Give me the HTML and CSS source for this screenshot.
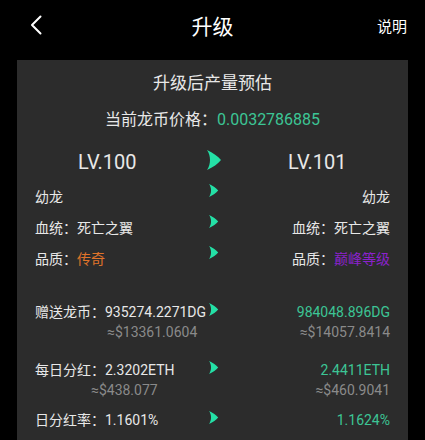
FILE: index.html
```html
<!DOCTYPE html>
<html lang="zh-CN">
<head>
    <meta charset="UTF-8">
    <title>升级</title>
    <link rel="stylesheet" href="styles.css">
</head>
<body>
    <div class="nav">
        <div class="nav-back">
            <svg width="12" height="20" viewBox="0 0 12 20"><path d="M10.5 1.5 L2 10 L10.5 18.5" fill="none" stroke="#fff" stroke-width="2" stroke-linecap="round" stroke-linejoin="round"/></svg>
        </div>
        <div class="nav-title">升级</div>
        <div class="nav-help">说明</div>
    </div>

    <div class="card">
        <div class="card-title">升级后产量预估</div>
        <div class="price">当前龙币价格：<span class="green">0.0032786885</span></div>

        <div class="cmp lv-row">
            <div class="lv lv-from">LV.100</div>
            <svg class="arrow-big" width="16" height="20" viewBox="0 0 16 20"><path d="M2 0 C8 3 13 6 16 10 C13 14 8 17 2 20 C6 14 6 6 2 0 Z" fill="#24e0a6"/></svg>
            <div class="lv lv-to">LV.101</div>
        </div>

        <div class="cmp attr">
            <div>幼龙</div>
            <svg class="arrow" width="12" height="13" viewBox="0 0 16 20"><path d="M2 0 C8 3 13 6 16 10 C13 14 8 17 2 20 C6 14 6 6 2 0 Z" fill="#24e0a6"/></svg>
            <div class="right">幼龙</div>
        </div>
        <div class="cmp attr">
            <div>血统：死亡之翼</div>
            <svg class="arrow" width="12" height="13" viewBox="0 0 16 20"><path d="M2 0 C8 3 13 6 16 10 C13 14 8 17 2 20 C6 14 6 6 2 0 Z" fill="#24e0a6"/></svg>
            <div class="right">血统：死亡之翼</div>
        </div>
        <div class="cmp attr">
            <div>品质：<span class="orange">传奇</span></div>
            <svg class="arrow" width="12" height="13" viewBox="0 0 16 20"><path d="M2 0 C8 3 13 6 16 10 C13 14 8 17 2 20 C6 14 6 6 2 0 Z" fill="#24e0a6"/></svg>
            <div class="right">品质：<span class="purple">巅峰等级</span></div>
        </div>

        <div class="cmp money money-first">
            <div>
                <div class="main">赠送龙币：935274.2271DG</div>
                <div class="sub sub-dg">≈$13361.0604</div>
            </div>
            <svg class="arrow" width="12" height="13" viewBox="0 0 16 20"><path d="M2 0 C8 3 13 6 16 10 C13 14 8 17 2 20 C6 14 6 6 2 0 Z" fill="#24e0a6"/></svg>
            <div class="right">
                <div class="main green">984048.896DG</div>
                <div class="sub">≈$14057.8414</div>
            </div>
        </div>
        <div class="cmp money money-eth">
            <div>
                <div class="main">每日分红：2.3202ETH</div>
                <div class="sub sub-eth">≈$438.077</div>
            </div>
            <svg class="arrow" width="12" height="13" viewBox="0 0 16 20"><path d="M2 0 C8 3 13 6 16 10 C13 14 8 17 2 20 C6 14 6 6 2 0 Z" fill="#24e0a6"/></svg>
            <div class="right">
                <div class="main green">2.4411ETH</div>
                <div class="sub">≈$460.9041</div>
            </div>
        </div>
        <div class="cmp money money-rate">
            <div class="main">日分红率：1.1601%</div>
            <svg class="arrow" width="12" height="13" viewBox="0 0 16 20"><path d="M2 0 C8 3 13 6 16 10 C13 14 8 17 2 20 C6 14 6 6 2 0 Z" fill="#24e0a6"/></svg>
            <div class="right main green">1.1624%</div>
        </div>
    </div>
</body>
</html>
```

FILE: styles.css
```css
:root {
    --green: #3cc595;
    --text: #e8e8e8;
    --sub: #8a8a8a;
}

body {
    margin: 0;
    background: #000;
    color: var(--text);
    font-family: Roboto, "Noto Sans CJK SC", sans-serif;
    height: 440px;
    overflow: hidden;
}

.nav {
    display: grid;
    grid-template-columns: 1fr auto 1fr;
    align-items: center;
    height: 50px;
}

.nav-back {
    padding-left: 30px;
    height: 20px;
}

.nav-title {
    font-size: 21px;
    color: #fff;
}

.nav-help {
    text-align: right;
    padding-right: 18px;
    font-size: 15px;
    color: #fff;
}

.card {
    margin: 10px 17px 0;
    padding: 11px 18px 30px;
    background: #2c2c2c;
    font-size: 14px;
}

.card-title {
    text-align: center;
    font-size: 17px;
    line-height: 24px;
}

.price {
    margin-top: 13px;
    text-align: center;
    font-size: 16px;
    line-height: 24px;
}

.green {
    color: var(--green);
}

.orange {
    color: #e0742a;
}

.purple {
    color: #8b22cc;
}

.cmp {
    display: grid;
    grid-template-columns: minmax(0, 1fr) 14px minmax(0, 1fr);
    white-space: nowrap;
}

.right {
    text-align: right;
}

.lv-row {
    margin-top: 16px;
    line-height: 28px;
    font-size: 20px;
}

.lv {
    text-align: center;
}

.lv-from {
    padding-right: 26px;
}

.lv-to {
    padding-left: 25px;
}

.arrow-big {
    margin-top: 2px;
    margin-left: -1px;
}

.attr {
    margin-top: 11px;
    line-height: 20px;
}

.arrow {
    margin-top: -3px;
    margin-left: 1px;
}

.money .arrow {
    margin-top: 1px;
}

.main {
    line-height: 20px;
}

.sub {
    line-height: 21px;
    color: var(--sub);
}

.sub-dg {
    padding-left: 72px;
}

.sub-eth {
    padding-left: 56px;
}

.money-first {
    margin-top: 33px;
}

.money-eth {
    margin-top: 17px;
}

.money-rate {
    margin-top: 9px;
}
```
